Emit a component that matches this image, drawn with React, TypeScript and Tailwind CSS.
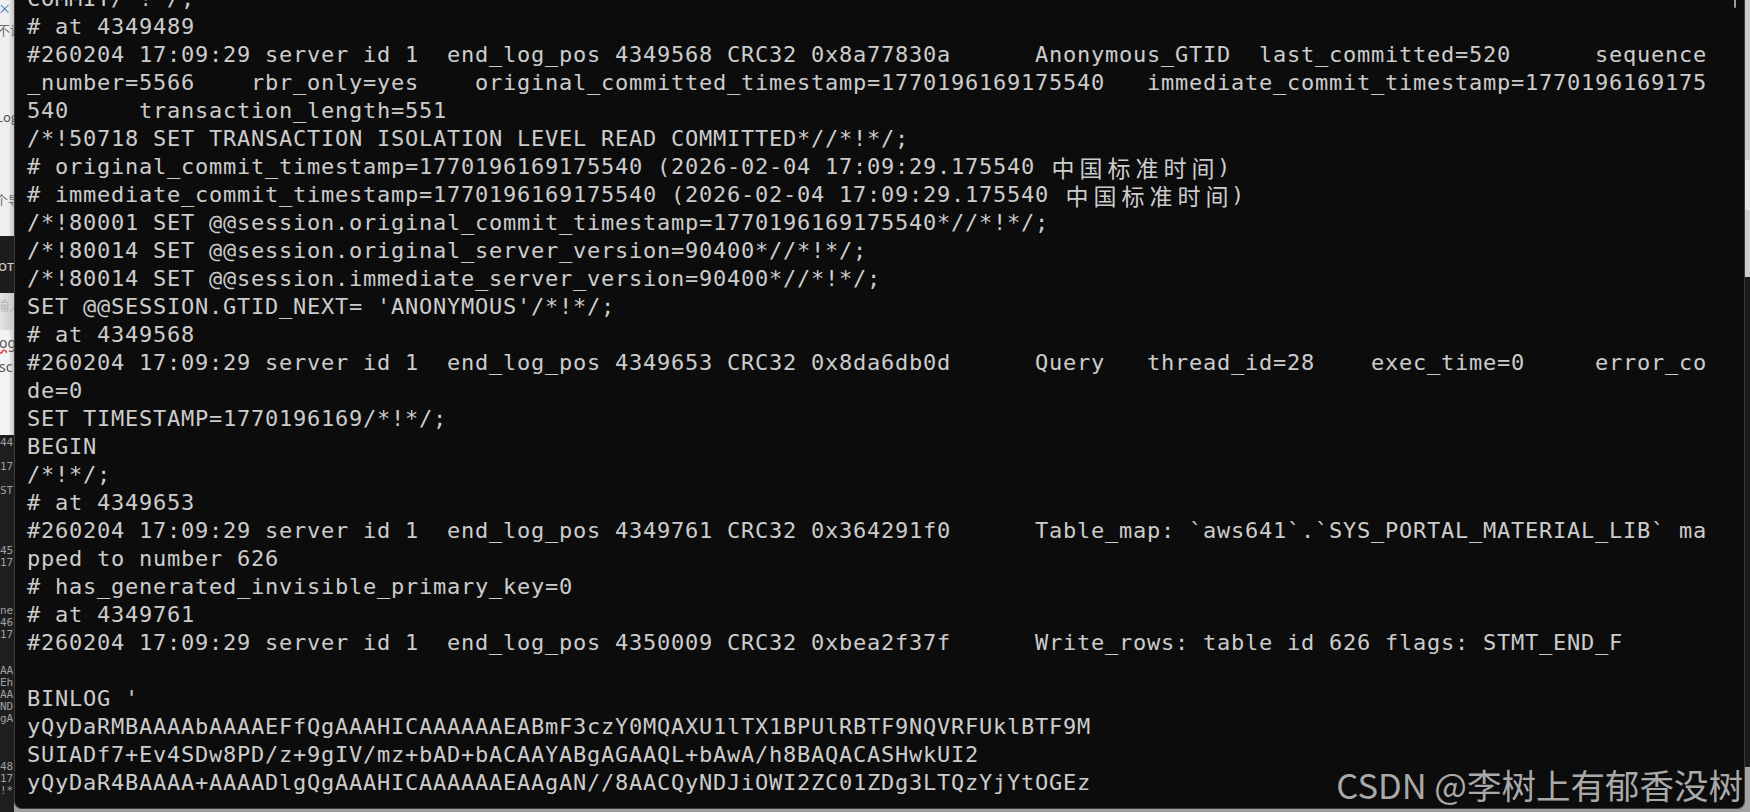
import React from "react";

const pad = (s: string, n: number) => s.padEnd(n, " ");
const hdr = (pos: string, crc: string) =>
  `#260204 17:09:29 server id 1  end_log_pos ${pos} CRC32 ${crc} `;

const LINES: string[] = [
  "COMMIT/*!*/;",
  "# at 4349489",
  pad(hdr("4349568", "0x8a77830a"), 72) + pad("Anonymous_GTID", 16) + pad("last_committed=520", 24) + "sequence",
  pad("_number=5566", 16) + pad("rbr_only=yes", 16) + pad("original_committed_timestamp=1770196169175540", 48) + "immediate_commit_timestamp=1770196169175",
  pad("540", 8) + "transaction_length=551",
  "/*!50718 SET TRANSACTION ISOLATION LEVEL READ COMMITTED*//*!*/;",
  "# original_commit_timestamp=1770196169175540 (2026-02-04 17:09:29.175540 中国标准时间)",
  "# immediate_commit_timestamp=1770196169175540 (2026-02-04 17:09:29.175540 中国标准时间)",
  "/*!80001 SET @@session.original_commit_timestamp=1770196169175540*//*!*/;",
  "/*!80014 SET @@session.original_server_version=90400*//*!*/;",
  "/*!80014 SET @@session.immediate_server_version=90400*//*!*/;",
  "SET @@SESSION.GTID_NEXT= 'ANONYMOUS'/*!*/;",
  "# at 4349568",
  pad(hdr("4349653", "0x8da6db0d"), 72) + pad("Query", 8) + pad("thread_id=28", 16) + pad("exec_time=0", 16) + "error_co",
  "de=0",
  "SET TIMESTAMP=1770196169/*!*/;",
  "BEGIN",
  "/*!*/;",
  "# at 4349653",
  pad(hdr("4349761", "0x364291f0"), 72) + "Table_map: `aws641`.`SYS_PORTAL_MATERIAL_LIB` ma",
  "pped to number 626",
  "# has_generated_invisible_primary_key=0",
  "# at 4349761",
  pad(hdr("4350009", "0xbea2f37f"), 72) + "Write_rows: table id 626 flags: STMT_END_F",
  "",
  "BINLOG '",
  "yQyDaRMBAAAAbAAAAEFfQgAAAHICAAAAAAEABmF3czY0MQAXU1lTX1BPUlRBTF9NQVRFUklBTF9M",
  "SUIADf7+Ev4SDw8PD/z+9gIV/mz+bAD+bACAAYABgAGAAQL+bAwA/h8BAQACASHwkUI2",
  "yQyDaR4BAAAA+AAAADlgQgAAAHICAAAAAAEAAgAN//8AACQyNDJiOWI2ZC01ZDg3LTQzYjYtOGEz",
];

function TermLine({ text }: { text: string }) {
  const parts: React.ReactNode[] = [];
  let buf = "";
  let k = 0;
  for (const ch of text) {
    if (/[\u4e00-\u9fff]/.test(ch)) {
      if (buf) {
        parts.push(<span key={k++}>{buf}</span>);
        buf = "";
      }
      parts.push(
        <span
          key={k++}
          className="inline-block w-[28px] h-[28px] align-top text-center tracking-normal text-[23px] font-['Noto_Sans_CJK_SC',sans-serif]"
        >
          {ch}
        </span>
      );
    } else buf += ch;
  }
  if (buf) parts.push(<span key={k++}>{buf}</span>);
  return <div className="h-[28px] whitespace-pre">{parts.length ? parts : " "}</div>;
}

const EDITOR_ROWS: string[] = [
  "44", "", "17", "", "ST", "", "", "", "", "45", "17", "", "", "", "ne", "46", "17", "", "",
  "AA", "Eh", "AA", "ND", "gA", "", "", "", "48", "17", "!*)", "",
];

function LeftStrip() {
  return (
    <div className="w-[14px] h-[812px] shrink-0 flex flex-col overflow-hidden">
      <div className="h-[236px] bg-linear-to-r from-[#efefef] from-60% to-[#c4c4c4] flex flex-col text-[13px] leading-[16px] text-[#6f6f6f] font-['Noto_Sans_CJK_SC',sans-serif] whitespace-nowrap">
        <span className="h-[16px] -ml-[2px] text-[#2f6fd6]">×</span>
        <span className="mt-[6px] -ml-[3px]">不设</span>
        <span className="mt-[71px] -ml-[4px] text-[#555]">Log</span>
        <span className="mt-[67px] -ml-[5px]">个导</span>
      </div>
      <div className="h-[57px] bg-[#1d1d1d] pt-[20px] text-[15px] leading-[18px] text-[#d0d0d0] font-['Noto_Sans',sans-serif] whitespace-nowrap">
        <span className="-ml-[2px]">oт</span>
      </div>
      <div className="h-[37px] bg-linear-to-r from-[#e4e4e4] to-[#c9c9c9] pt-[4px] text-[13px] leading-[16px] text-[#b0b0b0] font-['Noto_Sans_CJK_SC',sans-serif] whitespace-nowrap">
        <span className="-ml-[4px]">输入</span>
      </div>
      <div className="h-[105px] bg-linear-to-r from-[#f3f3f3] from-60% to-[#c8c8c8] flex flex-col pt-[5px] text-[14px] leading-[16px] text-[#555] font-['Noto_Sans',sans-serif] whitespace-nowrap">
        <span className="-ml-[1px] underline decoration-wavy decoration-[#e03030]">og</span>
        <span className="mt-[8px] -ml-[1px]">sc</span>
      </div>
      <div className="flex-1 bg-[#1e1e1e] pt-[2px] flex flex-col text-[11px] leading-[12px] text-[#a0a0a0] font-['DejaVu_Sans_Mono',monospace] whitespace-nowrap">
        {EDITOR_ROWS.map((r, i) => (
          <div key={i} className="h-[12px]">
            {r}
          </div>
        ))}
      </div>
    </div>
  );
}

function RightStrip() {
  return (
    <div className="w-[5px] h-[812px] shrink-0 flex flex-col">
      <div className="h-[160px] bg-[#cbcbcb]" />
      <div className="h-[50px] bg-[#e6e6e6]" />
      <div className="h-[67px] bg-[#cdcdcd]" />
      <div className="flex-1 bg-[#1c1c1c]" />
      <div className="h-[45px] bg-[#a2a2a2]" />
    </div>
  );
}

export default function App() {
  return (
    <div className="w-[1750px] h-[812px] overflow-hidden flex items-start bg-[#9f9f9f]">
      <LeftStrip />
      <div className="relative w-[1731px] h-[809px] shrink-0 bg-[#0c0c0c] border-l border-r border-b border-[#3a3a3a] rounded-bl-[8px] rounded-br-[8px] overflow-hidden">
        <div className="-mt-[15px] pl-[12px] text-[22px] leading-[28px] tracking-[0.755px] text-[#cccccc] font-['DejaVu_Sans_Mono','Noto_Sans_CJK_SC',monospace]">
          {LINES.map((l, i) => (
            <TermLine key={i} text={l} />
          ))}
        </div>
        <div className="absolute right-[8px] top-0 w-[2px] h-[8px] bg-[#9a9a9a] rounded-b-[1px]" />
        <div className="absolute right-[1px] bottom-[7px] text-[34.5px] leading-none text-[#a9a9a9] whitespace-nowrap font-['Noto_Sans_CJK_SC',sans-serif]">
          CSDN @李树上有郁香没树
        </div>
      </div>
      <RightStrip />
    </div>
  );
}
